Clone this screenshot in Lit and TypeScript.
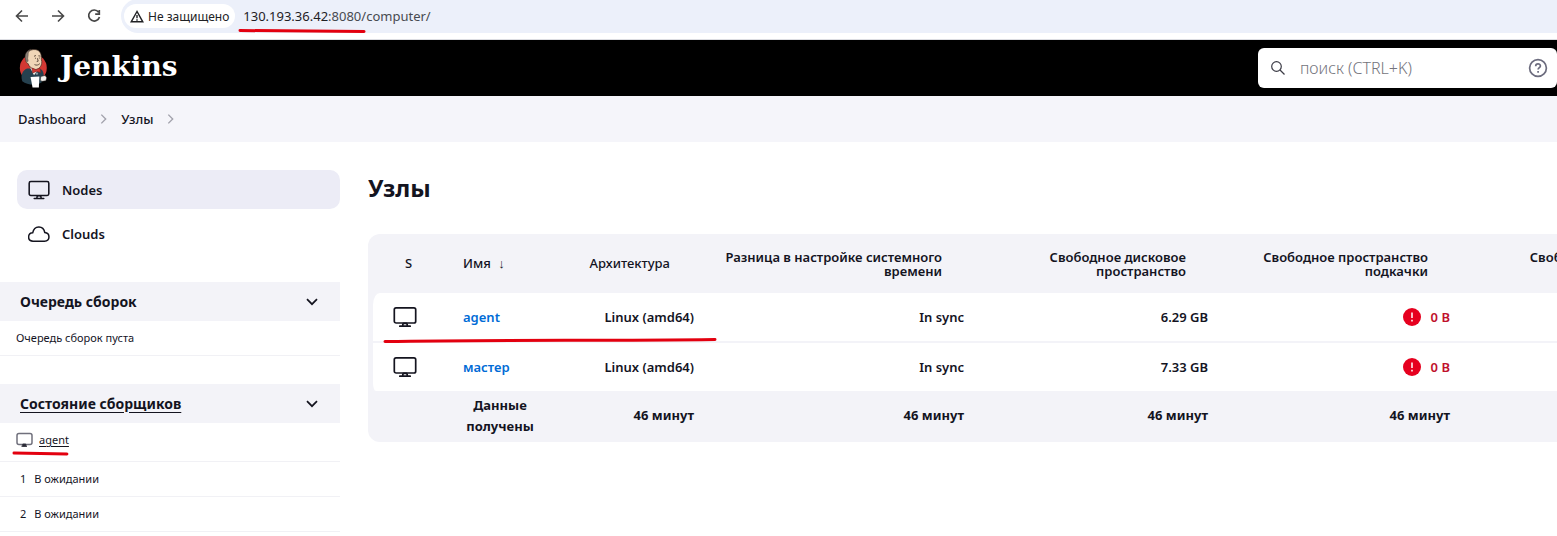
import { LitElement, html, css, svg } from "lit";
import { customElement, property } from "lit/decorators.js";

const monitor = html`<svg class="monitor" viewBox="0 0 24 22" fill="none" stroke="currentColor" stroke-width="1.7" stroke-linejoin="round" aria-hidden="true">
  <rect x="1.300" y="1.800" width="21.400" height="15.200" rx="1.800"></rect>
  <path d="M9.800 20v-1.500l.7-1.200h3l.7 1.200V20M6.800 20.200h10.400" stroke-linecap="round"></path>
</svg>`;

const smallMonitor = html`<svg class="monitor" viewBox="0 0 17 16" fill="none" stroke="currentColor" stroke-width="1.500" stroke-linejoin="round" aria-hidden="true">
  <rect x="1" y="1.500" width="15" height="11" rx="2"></rect>
  <path d="M5.500 14.200h5.500" stroke="#2b2b36" stroke-width="1.300"></path>
  <path d="M6.800 14v-2h3v2z" fill="#2b2b36" stroke="#2b2b36" stroke-width=".8"></path>
</svg>`;

const chevronRight = html`<svg class="sep" viewBox="0 0 8 12" fill="none" stroke="#a2a2ac" stroke-width="1.600" aria-hidden="true"><path d="M1.500 1 6.500 6l-5 5"></path></svg>`;

const chevronDown = html`<svg class="chevron" viewBox="0 0 12 8" fill="none" stroke="currentColor" stroke-width="1.7" aria-hidden="true"><path d="M1 1.200 6 6.200l5-5"></path></svg>`;

const butler = svg`
  <ellipse cx="14.300" cy="20.500" rx="13.800" ry="14" fill="#d33833"></ellipse>
  <path d="M3 34C1 28 3 23 8 21l12 0c4 1 5 4 5 8l-2 6c-5 4-15 3-20-1z" fill="#26414f"></path>
  <path d="M11 20l4 8 6-8z" fill="#f3efe6"></path>
  <path d="M7 7C8 1 20-1 22 6c1 3 0 5 1 8 0 5-3 8-7 8-4-1-6-3-7-6-3-1-3-5-2-9z" fill="#f0d6b7" stroke="#3b2a20" stroke-width=".7"></path>
  <path d="M7.500 14C4.500 9 6 3 12 1.200c-3 2.300-3 4-3 6.300l-.5 3 .5 3z" fill="#8a7f76" stroke="#4a4039" stroke-width=".5"></path>
  <path d="M15 8.500l2-.8M19.500 8l2 .3M16 10.500h1M20 10.300h1M18.500 10.500l.8 3-1.500.4M15.500 17c2 1 4 .6 5.500-1" fill="none" stroke="#3b2a20" stroke-width=".8"></path>
  <path d="M13 20.500l4 1.800 4-1.800.8 4.500-4.300-1-4 1.500z" fill="#d33833" stroke="#7d1f1c" stroke-width=".6"></path>
  <circle cx="18" cy="26.200" r="1.200" fill="#8a9ba5"></circle>
  <path d="M11.500 29.800l9-.6-.5 11.300h-6.500z" fill="#fff"></path>
  <path d="M22 29.200l4.500-1 1.500 2.300-.8 3-4 .7-1.700-1.200z" fill="#f6f3ee" stroke="#2c2521" stroke-width=".5"></path>`;

const palette = css`
  :host {
    --ink: #14141f;
    --panel: #f3f3f8;
    --mark: #e3000f;
    color: var(--ink);
    font-family: "Noto Sans", "Open Sans", sans-serif;
  }
  * { box-sizing: border-box; }
  a { color: inherit; text-decoration: none; }
  button { font: inherit; color: inherit; border: 0; padding: 0; background: none; }
  svg { display: block; flex: none; }
  .marked { position: relative; }
  .mark { position: absolute; fill: none; stroke: var(--mark); stroke-width: 3; stroke-linecap: round; overflow: visible; pointer-events: none; }
`;

@customElement("browser-bar")
export class BrowserBar extends LitElement {
  static styles = [palette, css`
    :host { display: block; background: #fff; border-bottom: 1px solid #dcdde2; }
    .bar { display: flex; align-items: center; height: 39px; padding: 0 0 7px 14px; gap: 20px; }
    .nav { width: 16px; height: 16px; color: #474747; }
    .address { display: flex; align-items: center; flex: 1; height: 34px; margin-left: -1px; padding: 0 3px; gap: 8px; border-radius: 17px 0 0 17px; background: #ecf0fa; }
    .chip { display: flex; align-items: center; gap: 4px; height: 24px; padding: 0 6px; border-radius: 12px; background: #fff; color: #202124; font-size: 12px; }
    .url { color: #474a50; line-height: 20px; font-size: 13px; }
    .host { color: #1f2024; }
    .mark { left: -4px; top: 22px; width: calc(100% + 8px); height: 4px; }
  `];

  render() {
    return html`<div class="bar">
      <button class="nav" aria-label="Назад"><svg viewBox="0 0 16 16" fill="none" stroke="currentColor" stroke-width="1.6"><path d="M14 8H3M8 2.500 2.500 8 8 13.500"></path></svg></button>
      <button class="nav" aria-label="Вперёд"><svg viewBox="0 0 16 16" fill="none" stroke="currentColor" stroke-width="1.6"><path d="M2 8h11M8 2.500 13.500 8 8 13.500"></path></svg></button>
      <button class="nav" aria-label="Обновить"><svg viewBox="0 0 16 16" fill="none" stroke="currentColor" stroke-width="1.7"><path d="M12.600 4.200A5.500 5.500 0 1 0 13.500 9M13.300 2v4.200H9.200"></path></svg></button>
      <div class="address">
        <button class="chip"><svg width="14" height="13" viewBox="0 0 14 13" fill="none" stroke="currentColor" stroke-width="1.400"><path d="M7 1.500 1.200 11.800h11.600zM7 5v3.300M7 9.300v1.400"></path></svg>Не защищено</button>
        <span class="url"><span class="host marked">130.193.36.42<span class="url">:8080</span><svg class="mark" viewBox="0 0 128 4" preserveAspectRatio="none"><path d="M1 1.500 127 2.500"></path></svg></span>/computer/</span>
      </div>
    </div>`;
  }
}

@customElement("jenkins-header")
export class JenkinsHeader extends LitElement {
  static styles = [palette, css`
    :host { display: block; }
    .top { display: flex; align-items: center; justify-content: space-between; height: 56px; padding-left: 19px; background: #000; }
    .brand { display: flex; align-items: center; gap: 12px; color: #fff; font: bold 28px/36px "DejaVu Serif", serif; }
    .name { padding-bottom: 2px; }
    .search { display: flex; align-items: center; width: 299px; height: 40px; padding: 0 9px 0 12px; border-radius: 6px; background: #fff; }
    .search input { flex: 1; min-width: 0; margin: 0 0 0 14px; padding: 0; border: 0; outline: 0; background: none; font: 300 16px/24px "Noto Sans", sans-serif; color: var(--ink); }
    .search input::placeholder { color: #74747c; opacity: 1; }
    .crumbs { display: flex; align-items: center; gap: 14px; height: 46px; padding: 0 18px; background: #f5f5fa; font-size: 13px; font-weight: 500; }
    .sep { width: 7px; height: 12px; }
  `];

  render() {
    return html`<header class="top">
        <a class="brand" href="#"><svg width="29" height="40" viewBox="0 0 29 41">${butler}</svg><span class="name">Jenkins</span></a>
        <label class="search">
          <svg width="16" height="16" viewBox="0 0 16 16" fill="none" stroke="#3c3c46" stroke-width="1.200"><circle cx="6.500" cy="6.500" r="4.800"></circle><path d="M10 10l4.500 4.500"></path></svg>
          <input type="search" placeholder="поиск (CTRL+K)" aria-label="поиск">
          <svg width="20" height="20" viewBox="0 0 20 20" fill="none" stroke="#6c6c7e" stroke-width="1.700"><circle cx="10" cy="10" r="8.400"></circle><path d="M7.700 8.200c0-3 4.700-3 4.700-.2 0 1.700-2.300 1.700-2.300 3.600M10.100 13v1.700"></path></svg>
        </label>
      </header>
      <nav class="crumbs" aria-label="Навигация"><a href="#">Dashboard</a>${chevronRight}<a href="#">Узлы</a>${chevronRight}</nav>`;
  }
}

@customElement("side-panel")
export class SidePanel extends LitElement {
  static styles = [palette, css`
    :host { display: block; font-size: 11px; line-height: 16px; }
    .tasks { display: flex; flex-direction: column; gap: 5px; padding: 28px 0 29px 17px; }
    .task { display: flex; align-items: center; gap: 12px; height: 39px; padding: 0 11px; border-radius: 10px; font-size: 13px; font-weight: 600; }
    .task.active { background: #ececf6; }
    .task svg { width: 22px; height: 22px; }
    .pane { margin-bottom: 28px; }
    .title { display: flex; align-items: center; justify-content: space-between; height: 39px; padding: 0 22px 0 20px; background: var(--panel); font-size: 14px; font-weight: 700; }
    .title h2 { margin: 0; font-size: inherit; }
    .title a { text-decoration: underline; text-underline-offset: 3px; }
    .chevron { width: 12px; height: 8px; }
    .row { display: flex; align-items: center; gap: 8px; height: 35px; padding: 0 20px; border-bottom: 1px solid #f1f1f5; }
    .row.text { padding-left: 16px; }
    .row.node { height: 39px; padding: 0 16px 4px; }
    .node a { text-decoration: underline; text-underline-offset: 2px; }
    .node .monitor { width: 17px; height: 16px; color: #70707c; }
    .mark { left: -3px; top: 19px; width: calc(100% + 2px); height: 4px; }
    .agent { display: flex; align-items: center; gap: 6px; }
  `];

  render() {
    return html`<nav class="tasks">
        <a class="task active" href="#">${monitor}Nodes</a>
        <a class="task" href="#"><svg viewBox="0 0 22 22" fill="none" stroke="currentColor" stroke-width="1.500" stroke-linejoin="round"><path d="M5 18.200C-1 18-.6 10.200 4.700 9.800 6.200 2.200 15.300 2 16.800 9.500c5.500.6 5.700 8.500-.3 8.700z"></path></svg>Clouds</a>
      </nav>
      <section class="pane">
        <div class="title"><h2>Очередь сборок</h2><button aria-label="Свернуть очередь">${chevronDown}</button></div>
        <div class="row text">Очередь сборок пуста</div>
      </section>
      <section>
        <div class="title"><h2><a href="#">Состояние сборщиков</a></h2><button aria-label="Свернуть состояние">${chevronDown}</button></div>
        <div class="row node"><span class="agent marked">${smallMonitor}<a href="#">agent</a><svg class="mark" viewBox="0 0 56 4" preserveAspectRatio="none"><path d="M1 2 55 3"></path></svg></span></div>
        ${[1, 2].map((n) => html`<div class="row"><span>${n}</span><span>В ожидании</span></div>`)}
      </section>`;
  }
}

interface NodeRow { name: string; arch: string; clock: string; disk: string; swap: string; }

@customElement("node-table")
export class NodeTable extends LitElement {
  @property({ attribute: false }) nodes: NodeRow[] = [];

  static styles = [palette, css`
    :host { display: block; }
    .frame { position: relative; width: 1414px; border-radius: 12px; background: var(--panel); }
    table { width: 100%; table-layout: fixed; border-collapse: separate; border-spacing: 0; font-size: 13px; line-height: 20px; font-weight: 600; }
    .c-s { width: 75px; }
    .c-name { width: 114px; }
    .c-arch { width: 157px; }
    .c-clock { width: 270px; }
    .c-disk { width: 244px; }
    .c-swap { width: 242px; }
    th, td { padding: 0 20px; text-align: right; vertical-align: middle; white-space: nowrap; }
    thead th { height: 59px; padding: 0 42px 0 8px; font-weight: 600; line-height: 14px; }
    thead th:nth-child(-n + 3) { padding: 0 44px 2px 20px; font-weight: 500; }
    thead th:nth-child(1) { padding-right: 14px; text-align: center; }
    thead th:nth-child(2), td:nth-child(2) { padding-right: 0; text-align: left; }
    tbody td { height: 50px; background: #fff; border-bottom: 2px solid var(--panel); }
    tbody tr:last-child td { height: 48px; border-bottom: 0; }
    tbody td:first-child { border-left: 5px solid var(--panel); }
    tbody tr:first-child td:first-child { border-top-left-radius: 12px; }
    tbody tr:last-child td:first-child { border-bottom-left-radius: 8px; }
    .monitor { width: 24px; height: 22px; }
    td a { color: #006bd6; }
    .bad { display: flex; align-items: center; justify-content: flex-end; gap: 10px; color: #c0102c; }
    tfoot th { height: 51px; padding-bottom: 2px; font-weight: 700; line-height: 21px; }
    tfoot th:nth-child(2) { text-align: center; white-space: normal; }
    .arrow { margin-left: 4px; }
    .mark { left: 16px; top: 104px; width: 332px; height: 4px; }
  `];

  render() {
    return html`<div class="frame">
      <table>
        <colgroup><col class="c-s"><col class="c-name"><col class="c-arch"><col class="c-clock"><col class="c-disk"><col class="c-swap"><col></colgroup>
        <thead><tr>
          <th>S</th><th>Имя <span class="arrow">↓</span></th><th>Архитектура</th>
          <th>Разница в настройке системного<br>времени</th>
          <th>Свободное дисковое<br>пространство</th>
          <th>Свободное пространство<br>подкачки</th>
          <th>Свободное место во временной<br>папке</th>
        </tr></thead>
        <tbody>${this.nodes.map((n) => html`<tr>
          <td>${monitor}</td><td><a href="#">${n.name}</a></td><td>${n.arch}</td><td>${n.clock}</td><td>${n.disk}</td>
          <td><span class="bad"><svg width="18" height="18" viewBox="0 0 18 18"><circle cx="9" cy="9" r="9" fill="#e6001f"></circle><path d="M9 4.500v5.500M9 11.800v1.700" stroke="#fff" stroke-width="1.500"></path></svg>${n.swap}</span></td><td></td>
        </tr>`)}</tbody>
        <tfoot><tr><th></th><th>Данные получены</th><th>46 минут</th><th>46 минут</th><th>46 минут</th><th>46 минут</th><th></th></tr></tfoot>
      </table>
      <svg class="mark" viewBox="0 0 332 4"><path d="M1 3.500 C120 1.500 220 3 331 1.500"></path></svg>
    </div>`;
  }
}

@customElement("app-root")
export class AppRoot extends LitElement {
  static styles = [palette, css`
    :host { display: block; min-height: 100vh; background: #fff; overflow: hidden; }
    .page { display: flex; gap: 28px; }
    side-panel { flex: 0 0 340px; }
    main { flex: 1; min-width: 0; padding-top: 30px; overflow: hidden; }
    h1 { margin: 0 0 30px; font-size: 24px; line-height: 32px; font-weight: 700; }
  `];

  private nodes: NodeRow[] = [
    { name: "agent", arch: "Linux (amd64)", clock: "In sync", disk: "6.29 GB", swap: "0 B" },
    { name: "мастер", arch: "Linux (amd64)", clock: "In sync", disk: "7.33 GB", swap: "0 B" },
  ];

  render() {
    return html`<browser-bar></browser-bar>
      <jenkins-header></jenkins-header>
      <div class="page">
        <side-panel></side-panel>
        <main><h1>Узлы</h1><node-table .nodes=${this.nodes}></node-table></main>
      </div>`;
  }
}
